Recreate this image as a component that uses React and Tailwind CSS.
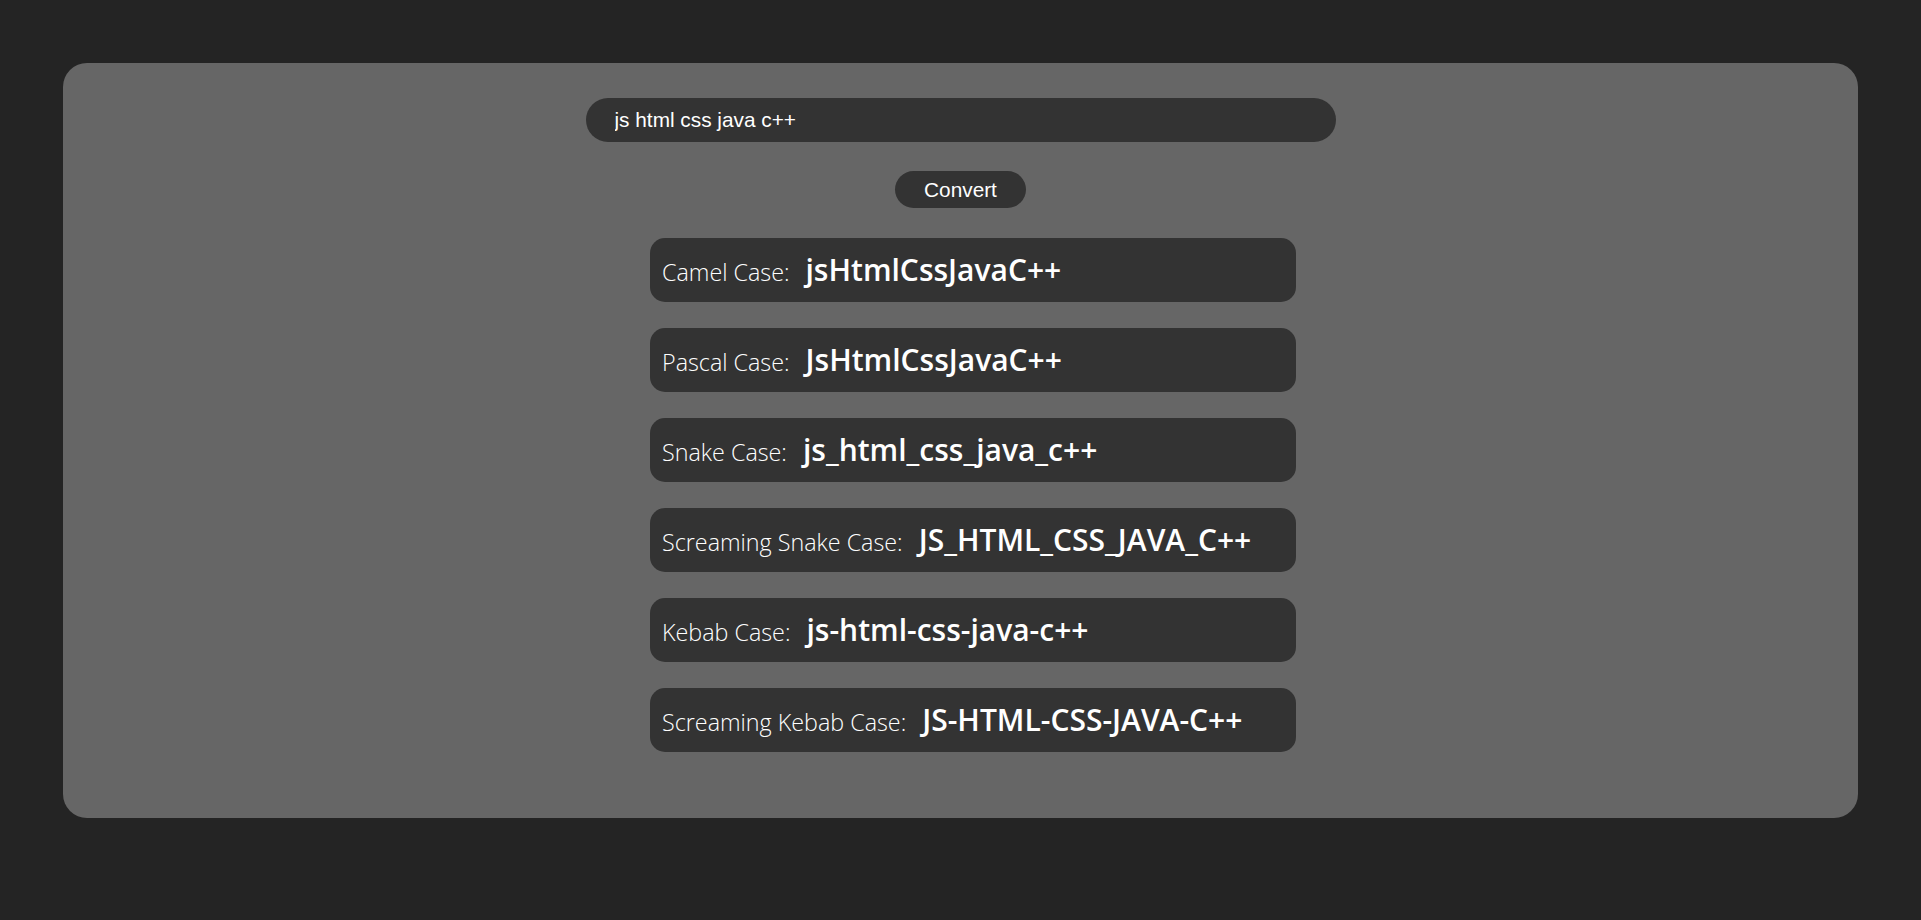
import { useState } from "react";

function toWords(s) {
  return s.trim().split(/\s+/).filter(Boolean);
}

const cap = (w) => w.charAt(0).toUpperCase() + w.slice(1).toLowerCase();

function convert(text) {
  const w = toWords(text);
  return [
    { label: "Camel Case:", value: w.map((x, i) => (i ? cap(x) : x.toLowerCase())).join("") },
    { label: "Pascal Case:", value: w.map(cap).join("") },
    { label: "Snake Case:", value: w.map((x) => x.toLowerCase()).join("_") },
    { label: "Screaming Snake Case:", value: w.map((x) => x.toUpperCase()).join("_") },
    { label: "Kebab Case:", value: w.map((x) => x.toLowerCase()).join("-") },
    { label: "Screaming Kebab Case:", value: w.map((x) => x.toUpperCase()).join("-") },
  ];
}

export default function App() {
  const [text, setText] = useState("js html css java c++");
  const [results, setResults] = useState(convert("js html css java c++"));

  return (
    <div className="min-h-screen w-full bg-[#242424] pt-[63px] pb-[40px] px-[63px]">
      <div className="w-full rounded-[24px] bg-[#666666] pt-[35px] pb-[66px] flex flex-col items-center">
        <input
          value={text}
          onChange={(e) => setText(e.target.value)}
          className="w-[750px] h-[44px] rounded-full bg-[#333333] pl-[29px] pr-4 text-[20.8px] text-white outline-none font-['Liberation_Sans',Arial,sans-serif]"
        />
        <button
          onClick={() => setResults(convert(text))}
          className="mt-[29px] h-[37px] px-[29px] rounded-full bg-[#333333] text-[20.8px] text-white font-['Liberation_Sans',Arial,sans-serif]"
        >
          Convert
        </button>
        <div className="mt-[30px] w-[671px] pl-[25px] flex flex-col gap-[26px]">
          {results.map((r) => (
            <div
              key={r.label}
              className="h-[64px] w-full rounded-[15px] bg-[#333333] pl-3 flex items-baseline pt-[12px] text-white font-['Open_Sans','Noto_Sans',sans-serif]"
            >
              <span className="text-[23.3px] font-light leading-[40px]">{r.label}</span>
              <span className="ml-[16px] text-[30px] font-semibold leading-[40px]">{r.value}</span>
            </div>
          ))}
        </div>
      </div>
    </div>
  );
}
